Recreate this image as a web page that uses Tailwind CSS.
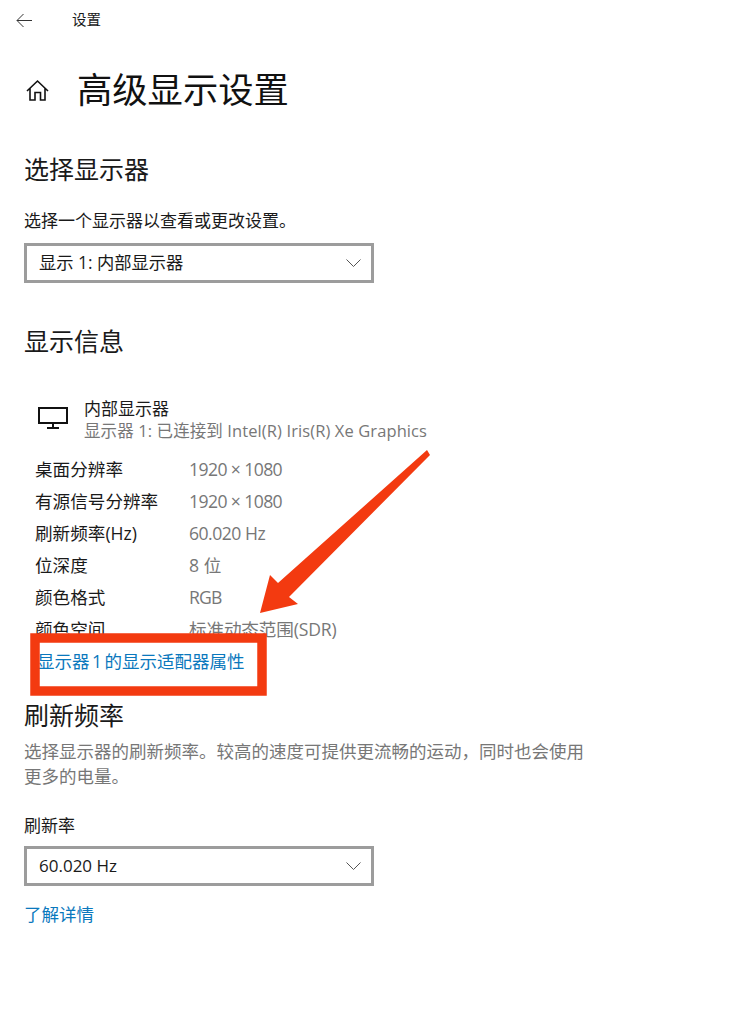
<!DOCTYPE html>
<html lang="zh-CN"><head><meta charset="utf-8">
<script src="https://cdn.jsdelivr.net/npm/@tailwindcss/browser@4"></script></head>
<body class="bg-white">
<div class="relative w-[748px] h-[1030px] overflow-hidden bg-white text-[#1a1a1a] font-['Open_Sans','Noto_Sans_CJK_SC',sans-serif] text-[17px] font-normal">
  <header class="h-[40px] pl-[16px] flex items-center">
    <svg class="w-[17px] h-[15px]" viewBox="0 0 17 15" fill="none" stroke="#333" stroke-width="1"><path d="M16 7.5H1M7.5 1L1 7.5L7.5 14"/></svg>
    <span class="ml-[39px] text-[14.5px] leading-none">设置</span>
  </header>
  <div class="mt-[25px] h-[50px] pl-[26px] flex items-center">
    <svg class="w-[23px] h-[23px]" viewBox="0 0 23 23" fill="none" stroke="#111" stroke-width="1.6"><path d="M1 12L11.500 2L22 12M4 9.500V21H9V13.500H14.500V21H19V9.500"/></svg>
    <h1 class="ml-[28px] text-[35.300px] leading-none font-normal text-[#111]">高级显示设置</h1>
  </div>
  <h2 class="mt-[36px] pl-[24px] text-[25px] leading-[36px] font-normal">选择显示器</h2>
  <p class="mt-[22px] pl-[24px] text-[17px] leading-[24px]">选择一个显示器以查看或更改设置。</p>
  <div class="mt-[10px] ml-[24px] w-[350px] h-[40px] border-[3px] border-[#9c9c9c] flex items-center justify-between pl-[12px] pr-[10px] text-[17.300px]">
    <span>显示 1: 内部显示器</span>
    <svg class="w-[15px] h-[8px]" viewBox="0 0 15 8" fill="none" stroke="#555" stroke-width="1"><path d="M.5.5L7.500 7.500L14.500.5"/></svg>
  </div>
  <h2 class="mt-[40px] pl-[24px] text-[25px] leading-[36px] font-normal">显示信息</h2>
  <div class="mt-[39px] pl-[38px] flex items-start">
    <svg class="mt-[9px] w-[30px] h-[22px]" viewBox="0 0 30 22" fill="none" stroke="#111" stroke-width="2"><path d="M1 1H29V16H1ZM15 16V20M9 21H21"/></svg>
    <div class="ml-[16px]">
      <div class="text-[17px] leading-[22px]">内部显示器</div>
      <div class="text-[16.500px] leading-[21px] text-[#777] tracking-[0.1px]">显示器 1: 已连接到 Intel(R) Iris(R) Xe Graphics</div>
    </div>
  </div>
  <dl class="mt-[12px] pl-[35px] grid grid-cols-[154px_1fr] auto-rows-[32px] items-center text-[17.600px]">
    <dt>桌面分辨率</dt><dd class="text-[#777] tracking-[-0.6px]">1920 × 1080</dd>
    <dt>有源信号分辨率</dt><dd class="text-[#777] tracking-[-0.6px]">1920 × 1080</dd>
    <dt>刷新频率(Hz)</dt><dd class="text-[#777] tracking-[-0.5px]">60.020 Hz</dd>
    <dt>位深度</dt><dd class="text-[#777]">8 位</dd>
    <dt>颜色格式</dt><dd class="text-[#777] tracking-[-0.8px]">RGB</dd>
    <dt>颜色空间</dt><dd class="text-[#777] tracking-[-0.15px]">标准动态范围(SDR)</dd>
  </dl>
  <a class="block mt-[4px] pl-[37px] text-[17.500px] leading-[24px] text-[#0a78bd] [word-spacing:-2px]">显示器 1 的显示适配器属性</a>
  <h2 class="mt-[24px] pl-[24px] text-[25px] leading-[36px] font-normal">刷新频率</h2>
  <p class="mt-[6px] pl-[24px] w-[590px] text-[17.500px] leading-[25px] text-[#777]">选择显示器的刷新频率。较高的速度可提供更流畅的运动，同时也会使用更多的电量。</p>
  <p class="mt-[25px] pl-[24px] text-[17px] leading-[24px]">刷新率</p>
  <div class="mt-[8px] ml-[24px] w-[350px] h-[40px] border-[3px] border-[#9c9c9c] flex items-center justify-between pl-[12px] pr-[10px] text-[17px]">
    <span>60.020 Hz</span>
    <svg class="w-[15px] h-[8px]" viewBox="0 0 15 8" fill="none" stroke="#555" stroke-width="1"><path d="M.5.5L7.500 7.500L14.500.5"/></svg>
  </div>
  <a class="block mt-[16px] pl-[24px] text-[17.500px] leading-[24px] text-[#0a78bd]">了解详情</a>
  <svg class="absolute left-0 top-0 pointer-events-none" width="748" height="1030" viewBox="0 0 748 1030">
    <path d="M427 450L430 455L289 597L298 604L260 613L270 575L278 583Z" fill="#f33a10"/>
    <rect x="35" y="638" width="227" height="53" fill="none" stroke="#f33a10" stroke-width="9.500"/>
  </svg>
</div>
</body></html>
